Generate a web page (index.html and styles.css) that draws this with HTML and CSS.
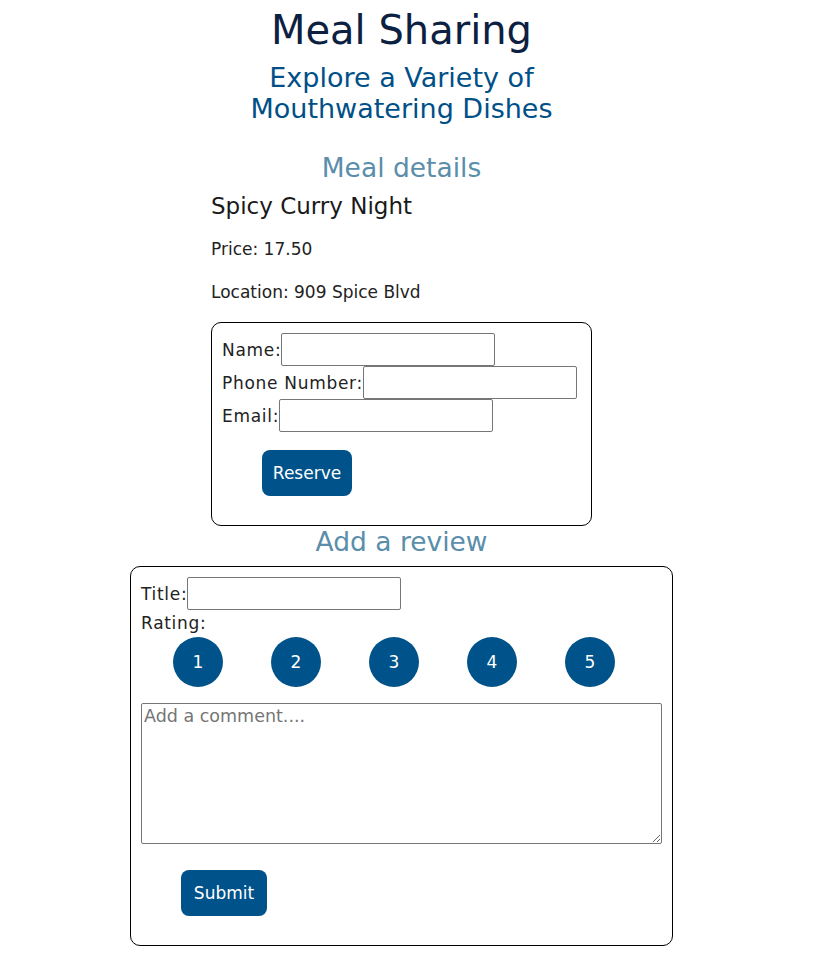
FILE: index.html
```html
<!DOCTYPE html>
<html lang="en">
<head>
<meta charset="utf-8">
<title>Meal Sharing</title>
<link rel="stylesheet" href="styles.css">
</head>
<body>
<div class="page">
  <header class="hero">
    <h1 class="hero-title">Meal Sharing</h1>
    <h2 class="hero-subtitle">Explore a Variety of<br>Mouthwatering Dishes</h2>
  </header>

  <section class="details">
    <h2 class="section-title">Meal details</h2>
    <div class="meal">
      <h3 class="meal-name">Spicy Curry Night</h3>
      <p class="meal-info">Price: 17.50</p>
      <p class="meal-info">Location: 909 Spice Blvd</p>

      <form class="card reserve-card">
        <div class="field"><label class="field-label">Name:</label><input class="field-input" type="text"></div>
        <div class="field"><label class="field-label">Phone Number:</label><input class="field-input" type="text"></div>
        <div class="field"><label class="field-label">Email:</label><input class="field-input" type="text"></div>
        <button class="btn reserve-btn" type="button">Reserve</button>
      </form>
    </div>
  </section>

  <section class="review">
    <h2 class="section-title review-title">Add a review</h2>
    <form class="card review-card">
      <div class="field"><label class="field-label">Title:</label><input class="field-input" type="text"></div>
      <div class="rating-label">Rating:</div>
      <div class="rating">
        <button class="rate" type="button">1</button>
        <button class="rate" type="button">2</button>
        <button class="rate" type="button">3</button>
        <button class="rate" type="button">4</button>
        <button class="rate" type="button">5</button>
      </div>
      <textarea class="comment" placeholder="Add a comment...."></textarea>
      <button class="btn submit-btn" type="button">Submit</button>
    </form>
  </section>
</div>
</body>
</html>
```

FILE: styles.css
```css
* { box-sizing: border-box; }

html, body {
  margin: 0;
  padding: 0;
  background: #ffffff;
}

body {
  font-family: "DejaVu Sans", "Noto Sans", sans-serif;
  color: #1a1a1a;
}

.page {
  width: 803px;
  display: flex;
  flex-direction: column;
  align-items: center;
}

.hero {
  text-align: center;
}

.hero-title {
  margin: 6px 0 0;
  font-size: 40px;
  line-height: 48px;
  font-weight: 400;
  color: #0c2142;
}

.hero-subtitle {
  margin: 8px 0 0;
  font-size: 27px;
  line-height: 31px;
  font-weight: 400;
  color: #005087;
}

.details {
  display: flex;
  flex-direction: column;
  align-items: center;
  margin-top: 27px;
}

.section-title {
  margin: 0;
  font-size: 26.5px;
  line-height: 34px;
  font-weight: 400;
  color: #5a8eaa;
  text-align: center;
}

.meal {
  width: 381px;
}

.meal-name {
  margin: 6px 0 0;
  font-size: 23px;
  line-height: 30px;
  font-weight: 400;
  color: #1a1a1a;
}

.meal-info {
  margin: 13px 0 0;
  font-size: 17px;
  line-height: 30px;
  color: #222;
}

.card {
  border: 1px solid #000;
  border-radius: 10px;
  padding: 10px;
  display: flex;
  flex-direction: column;
  align-items: flex-start;
}

.reserve-card {
  margin-top: 15px;
  width: 381px;
}

.field {
  display: flex;
  align-items: center;
  height: 33px;
}

.field-label {
  font-size: 17px;
  color: #222;
  letter-spacing: 0.7px;
}

.field-input {
  width: 214px;
  height: 33px;
  margin: 0;
  border: 1px solid #767676;
  border-radius: 2px;
  background: #fff;
  font: inherit;
}

.btn {
  border: none;
  border-radius: 8px;
  background: #00538a;
  color: #fff;
  font-family: inherit;
  font-size: 17px;
  line-height: 20px;
  padding: 13px 8px;
  height: 46px;
  cursor: pointer;
}

.reserve-btn {
  margin: 18px 0 19px 40px;
  width: 90px;
}

.review {
  display: flex;
  flex-direction: column;
  align-items: center;
}

.review-title {
  margin-top: -1px;
}

.review-card {
  margin-top: 7px;
  width: 543px;
}

.rating-label {
  font-size: 17px;
  line-height: 26px;
  color: #222;
  letter-spacing: 0.7px;
}

.rating {
  display: flex;
  gap: 48px;
  padding-left: 32px;
  margin-top: 1px;
}

.rate {
  width: 50px;
  height: 50px;
  border: none;
  border-radius: 50%;
  background: #00538a;
  color: #fff;
  font-family: inherit;
  font-size: 17px;
  padding: 0;
}

.comment {
  margin-top: 16px;
  width: 521px;
  height: 141px;
  border: 1px solid #767676;
  border-radius: 2px;
  padding: 2px;
  font-family: inherit;
  font-size: 17.5px;
  resize: both;
}

.comment::placeholder {
  color: #757575;
}

.submit-btn {
  margin: 26px 0 19px 40px;
  width: 86px;
}
```
